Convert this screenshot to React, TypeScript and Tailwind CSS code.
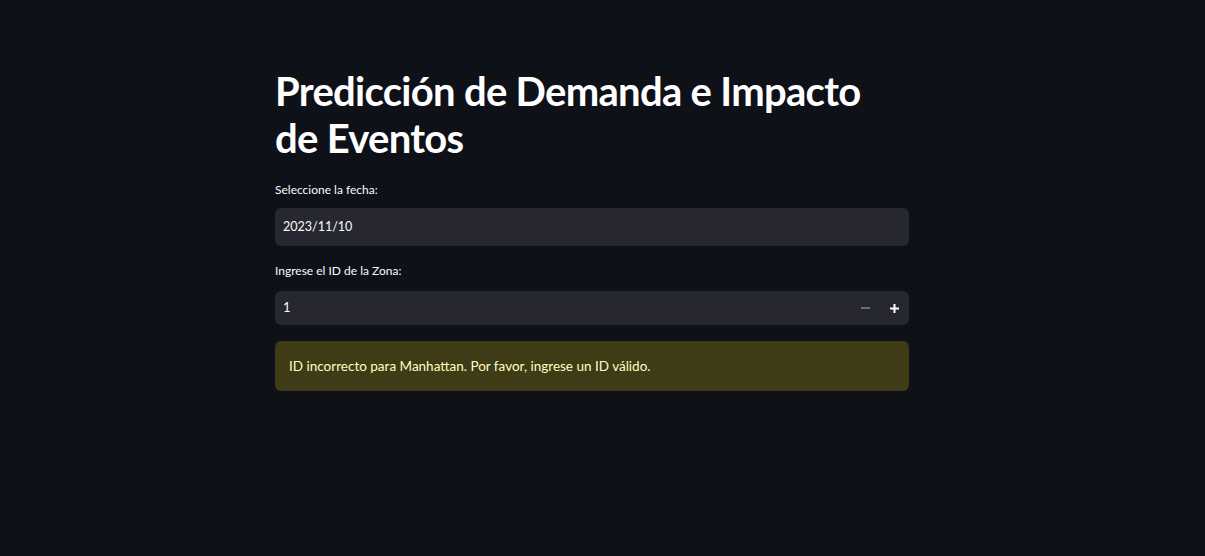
export default function App() {
  return (
    <div className="min-h-[556px] w-full bg-[#0e1117] text-[#fafafa]" style={{ fontFamily: '"Lato", "Open Sans", sans-serif' }}>
      <div className="flex justify-center pr-[21px]">
        <div className="w-[634px] pt-[68px]">
          <h1 className="text-[40px] leading-[47px] font-bold tracking-[-0.7px] text-white">
            Predicción de Demanda e Impacto de Eventos
          </h1>
          <div className="mt-[19px]">
            <label className="block text-[12px] leading-[18px] text-[#fafafa]">Seleccione la fecha:</label>
            <div className="mt-[9px] h-[38px] rounded-[6px] bg-[#262730] px-[8px] flex items-center text-[12.5px]">
              2023/11/10
            </div>
          </div>
          <div className="mt-[16px]">
            <label className="block text-[12px] leading-[18px] text-[#fafafa]">Ingrese el ID de la Zona:</label>
            <div className="mt-[11px] h-[34px] rounded-[6px] bg-[#262730] flex items-center text-[13px]">
              <span className="flex-1 px-[8px]">1</span>
              <span className="w-[28px] flex justify-center text-[#6b6d76]">
                <svg width="9" height="2" viewBox="0 0 9 2"><rect width="9" height="2" fill="currentColor" /></svg>
              </span>
              <span className="w-[30px] flex justify-center text-white">
                <svg width="9" height="9" viewBox="0 0 9 9"><rect y="3.5" width="9" height="2" fill="currentColor" /><rect x="3.5" width="2" height="9" fill="currentColor" /></svg>
              </span>
            </div>
          </div>
          <div className="mt-[16px] h-[50px] rounded-[6px] bg-[#3e3b16] px-[14px] flex items-center text-[13.5px] text-[#ffffc2]">
            ID incorrecto para Manhattan. Por favor, ingrese un ID válido.
          </div>
        </div>
      </div>
    </div>
  );
}
